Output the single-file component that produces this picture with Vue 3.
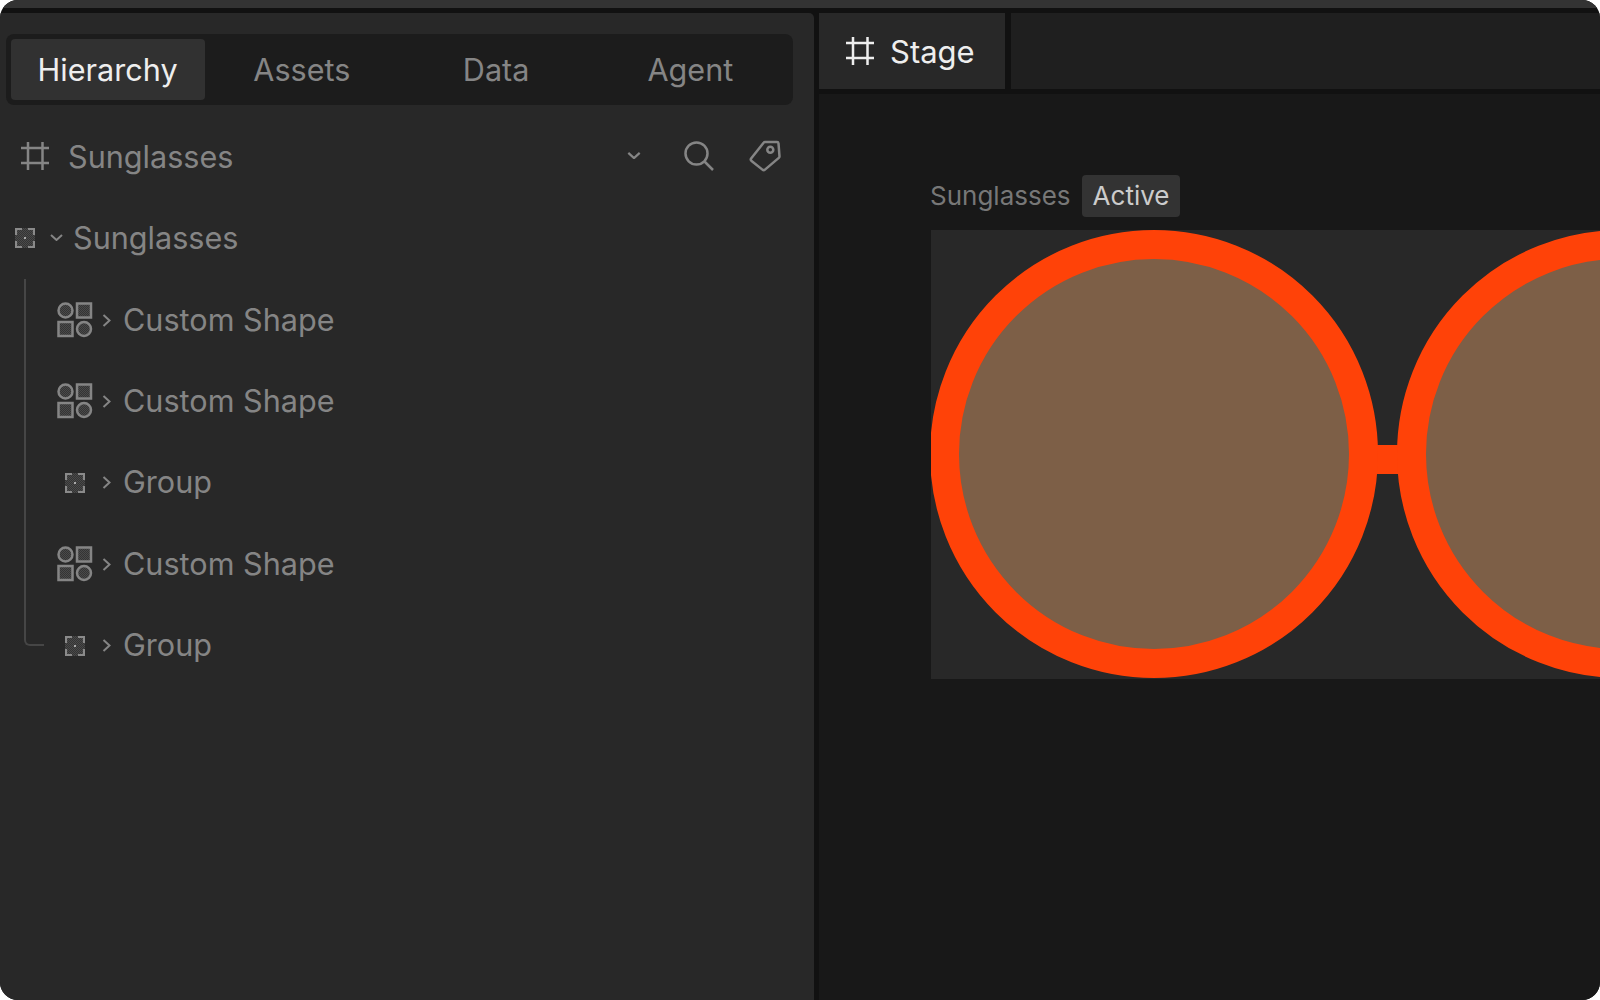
<template>
  <div class="window">
    <div class="topbar"></div>
    <div class="body">
      <aside class="panel">
        <!-- shared dither fill for the small node icons -->
        <svg class="defs" width="0" height="0" aria-hidden="true">
          <defs>
            <pattern id="dither" width="2" height="2" patternUnits="userSpaceOnUse">
              <rect width="2" height="2" fill="#343434" />
              <rect width="1" height="1" fill="#4a4a4a" />
              <rect x="1" y="1" width="1" height="1" fill="#4a4a4a" />
            </pattern>
          </defs>
        </svg>

        <div class="tabs">
          <button v-for="t in tabs" :key="t" class="tab" :class="{ active: t === 'Hierarchy' }">{{ t }}</button>
        </div>

        <div class="header">
          <svg class="frame-icon" viewBox="0 0 30 30">
            <path d="M8 1v28M22.500 1v28M1 7h28M1 22h28" />
          </svg>
          <span class="header-name">Sunglasses</span>
          <svg class="chev-down-big" viewBox="0 0 16 8"><path d="M1.500 1 8 7l6.500-6" /></svg>
          <svg class="search" viewBox="0 0 30 30">
            <circle cx="12.500" cy="12.500" r="11" />
            <path d="M20.500 20.500 29 29" />
          </svg>
          <svg class="tag" viewBox="0 0 32 32">
            <path d="M16 2h12a1.500 1.500 0 0 1 1.500 1.300l1 13a2 2 0 0 1-.7 1.600L16 29.600a2 2 0 0 1-2.600 0L2.600 21a2 2 0 0 1-.3-2.800L14.800 2.600A1.500 1.500 0 0 1 16 2Z" />
            <circle cx="21.300" cy="9.700" r="3" />
          </svg>
        </div>

        <div class="row root">
          <svg class="group-icon" viewBox="0 0 20 20">
            <rect width="20" height="20" fill="url(#dither)" />
            <path class="brackets" d="M1 7V1h6M13 1h6v6M19 13v6h-6M7 19H1v-6" />
            <rect x="9" y="9" width="2" height="2" fill="#aaa" />
          </svg>
          <svg class="chev-down" viewBox="0 0 13 7"><path d="M1 1l5.500 5L12 1" /></svg>
          <span class="name">Sunglasses</span>
        </div>

        <div class="children">
          <div v-for="(n, i) in nodes" :key="i" class="row child">
            <span class="icon-cell">
              <svg v-if="n.type === 'shape'" class="shape-icon" viewBox="0 0 36 36">
                <circle cx="8.500" cy="8.500" r="7" />
                <rect x="20" y="1.500" width="14" height="14" />
                <rect x="1.500" y="20" width="14" height="14" />
                <circle cx="27" cy="27" r="7" />
              </svg>
              <svg v-else class="group-icon" viewBox="0 0 20 20">
                <rect width="20" height="20" fill="url(#dither)" />
                <path class="brackets" d="M1 7V1h6M13 1h6v6M19 13v6h-6M7 19H1v-6" />
                <rect x="9" y="9" width="2" height="2" fill="#aaa" />
              </svg>
            </span>
            <svg class="chev-right" viewBox="0 0 9 13"><path d="M1.500 1l6 5.500-6 5.500" /></svg>
            <span class="name">{{ n.label }}</span>
          </div>
        </div>
      </aside>

      <main class="main">
        <div class="tabbar">
          <div class="stage-tab">
            <svg class="frame-icon light" viewBox="0 0 30 30">
              <path d="M8 1v28M22.500 1v28M1 7h28M1 22h28" />
            </svg>
            <span class="stage-name">Stage</span>
          </div>
          <div class="tabbar-rest"></div>
        </div>

        <div class="canvas">
          <div class="label-row">
            <span class="frame-name">Sunglasses</span>
            <span class="badge">Active</span>
          </div>
          <div class="artboard">
            <svg class="glasses" viewBox="0 0 670 449" width="670" height="449">
              <rect x="440" y="215" width="30" height="29" fill="#ff4208" />
              <circle cx="223" cy="224" r="209.500" fill="#7d5f47" stroke="#ff4208" stroke-width="29" />
              <circle cx="690" cy="224" r="209.500" fill="#7d5f47" stroke="#ff4208" stroke-width="29" />
            </svg>
          </div>
        </div>
      </main>
    </div>
  </div>
</template>

<script setup>
const tabs = ['Hierarchy', 'Assets', 'Data', 'Agent']

const nodes = [
  { type: 'shape', label: 'Custom Shape' },
  { type: 'shape', label: 'Custom Shape' },
  { type: 'group', label: 'Group' },
  { type: 'shape', label: 'Custom Shape' },
  { type: 'group', label: 'Group' },
]
</script>

<style>
html, body { background: #fff; }
</style>

<style scoped>
.window {
  width: 1600px;
  height: 1000px;
  border-radius: 18px;
  overflow: hidden;
  background: #111;
  display: flex;
  flex-direction: column;
  font-family: Inter, "Liberation Sans", sans-serif;
}
.topbar {
  height: 8px;
  background: #333;
  flex: none;
}
.body {
  flex: 1;
  display: flex;
  gap: 5px;
  padding-top: 5px;
  min-height: 0;
}

/* left panel */
.panel {
  width: 814px;
  flex: none;
  background: #282828;
  border-top-right-radius: 5px;
  padding-top: 21px;
  box-sizing: border-box;
  position: relative;
}
.defs { position: absolute; }
.tabs {
  margin: 0 21px 0 6px;
  height: 71px;
  box-sizing: border-box;
  padding: 5px;
  background: #1c1c1c;
  border-radius: 8px;
  display: grid;
  grid-template-columns: repeat(4, 1fr);
}
.tab {
  border: 0;
  background: none;
  border-radius: 4px;
  font: inherit;
  font-size: 30.600px;
  color: #858585;
  padding: 0 1px 0 0;
}
.tab.active {
  background: #313131;
  color: #eee;
}
.header {
  height: 81px;
  margin-top: 10px;
  margin-bottom: 1px;
  display: flex;
  align-items: center;
  padding-left: 20px;
  color: #858585;
  font-size: 30.600px;
}
.frame-icon {
  width: 30px;
  height: 30px;
  flex: none;
  fill: none;
  stroke: #858585;
  stroke-width: 2.500;
}
.frame-icon.light { stroke: #eee; }
.header-name { margin-left: 18px; margin-top: 2px; }
.chev-down-big {
  width: 14px;
  height: 7px;
  margin-left: auto;
  fill: none;
  stroke: #858585;
  stroke-width: 2.500;
}
.search {
  width: 30px;
  height: 30px;
  margin-left: 43px;
  fill: none;
  stroke: #858585;
  stroke-width: 2.500;
}
.tag {
  width: 32px;
  height: 32px;
  margin-left: 35px;
  margin-right: 33px;
  fill: none;
  stroke: #858585;
  stroke-width: 2.500;
}
.row {
  height: 81.400px;
  display: flex;
  align-items: center;
  color: #858585;
  font-size: 30.600px;
}
.root { padding-left: 15px; }
.group-icon { width: 20px; height: 20px; flex: none; }
.brackets { fill: none; stroke: #8a8a8a; stroke-width: 2.200; }
.chev-down {
  width: 13px;
  height: 7px;
  margin-left: 15px;
  fill: none;
  stroke: #858585;
  stroke-width: 2;
}
.child .name { margin-bottom: 2px; }
.root .name { margin-left: 10px; }
.children { position: relative; margin-top: 1px; }
.children::before {
  content: "";
  position: absolute;
  left: 24px;
  top: 0;
  bottom: 40px;
  width: 18px;
  border-left: 2px solid #464646;
  border-bottom: 2px solid #464646;
  border-bottom-left-radius: 6px;
}
.child { padding-left: 57px; }
.icon-cell {
  width: 36px;
  display: flex;
  justify-content: center;
  flex: none;
}
.shape-icon {
  width: 36px;
  height: 36px;
  fill: url(#dither);
  stroke: #858585;
  stroke-width: 2.500;
}
.chev-right {
  width: 9px;
  height: 13px;
  margin-left: 9px;
  fill: none;
  stroke: #858585;
  stroke-width: 2;
}
.child .name { margin-left: 12px; }

/* right side */
.main {
  flex: 1;
  min-width: 0;
  display: flex;
  flex-direction: column;
  gap: 5px;
}
.tabbar {
  height: 76px;
  flex: none;
  display: flex;
  gap: 6px;
}
.stage-tab {
  width: 186px;
  background: #282828;
  display: flex;
  align-items: center;
  gap: 15px;
  padding-left: 26px;
  box-sizing: border-box;
  color: #eee;
  font-size: 31px;
}
.tabbar-rest {
  flex: 1;
  background: #1f1f1f;
}
.canvas {
  flex: 1;
  background: #181818;
  padding: 80px 0 0 112px;
  overflow: hidden;
}
.label-row {
  display: flex;
  align-items: center;
  gap: 11px;
  height: 43px;
  margin-bottom: 13px;
  font-size: 26px;
}
.frame-name { color: #777; margin-left: -1px; }
.badge {
  height: 42px;
  line-height: 42px;
  padding: 0 11px;
  border-radius: 4px;
  background: #333;
  color: #ccc;
}
.artboard {
  width: 670px;
  height: 449px;
  background: #282828;
}
.glasses { display: block; }
</style>
